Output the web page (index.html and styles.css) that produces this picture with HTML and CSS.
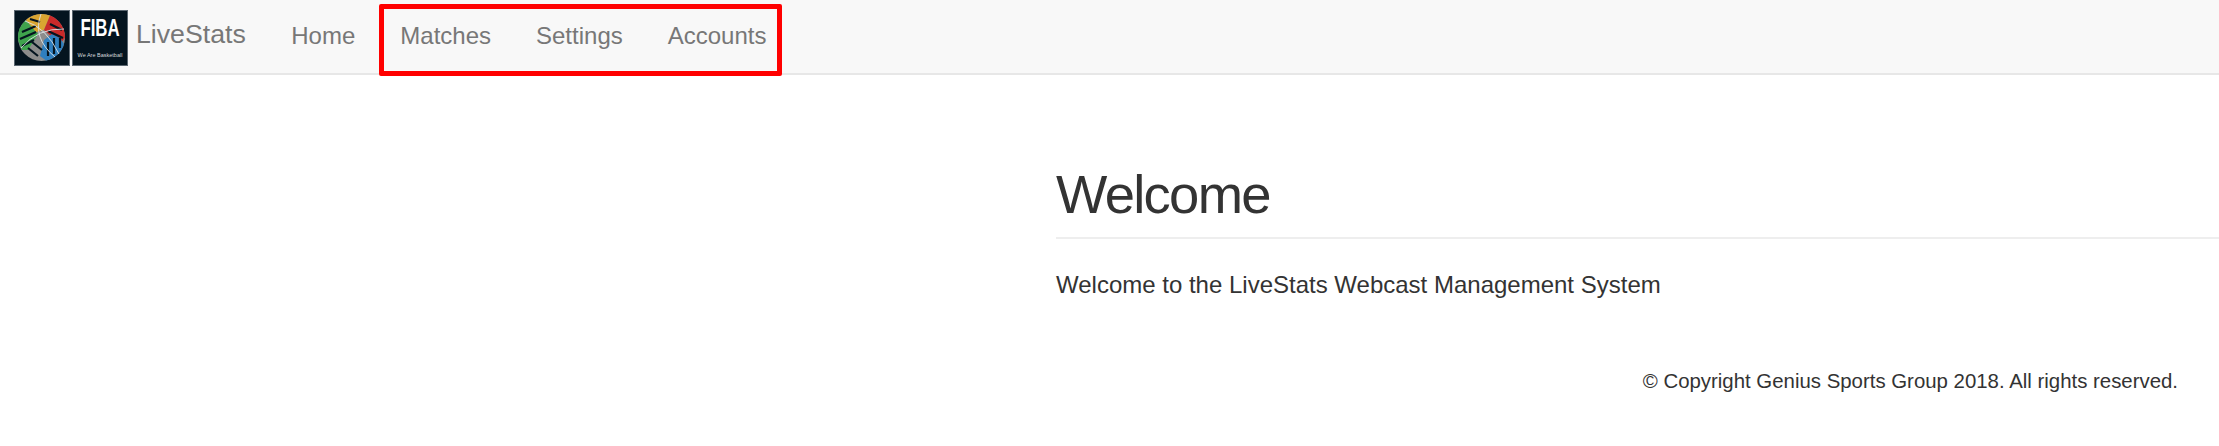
FILE: index.html
```html
<!DOCTYPE html>
<html lang="en">
<head>
    <meta charset="UTF-8">
    <title>LiveStats</title>
    <link rel="stylesheet" href="styles.css">
</head>
<body>
<nav class="navbar">
    <a href="#" class="brand">
        <svg class="logo" width="56" height="56" viewBox="0 0 56 56">
            <rect x="0.5" y="0.5" width="55" height="55" fill="#04141f" stroke="#5a6670"/>
            <!-- ball segments -->
            <circle cx="27.5" cy="27.5" r="23.5" fill="#8c8c8c"/>
            <path d="M4 30 A23.5 23.5 0 0 1 12 10 L24 24 L14 40 L8 40 Z" fill="#3fa34d"/>
            <path d="M12 10 A23.5 23.5 0 0 1 36 5.5 L30 20 L22 22 Z" fill="#d9a531"/>
            <path d="M36 5.5 A23.5 23.5 0 0 1 51 28 L46 34 L30 20 Z" fill="#c92a2a"/>
            <path d="M50 34 A23.5 23.5 0 0 1 32 50.5 L26 46 L30 30 L38 24 L46 28 Z" fill="#2f7fbf"/>
            <!-- dark stripes -->
            <path d="M8 22 L22 16 M6 29 L22 22 M8 36 L20 30 M16 9 L26 12 M36 14 L48 20 M34 21 L49 28 M34 32 L34 46 M40 28 L40 44 M46 28 L46 38 M14 38 L24 46 M18 32 L28 40" stroke="#04141f" stroke-width="2.2" fill="none"/>
            <!-- white seams -->
            <path d="M27 4 Q18 28 41 47 M11 11 Q32 17 45 44 M7 38 Q24 18 50 19" stroke="#dfe4e8" stroke-width="0.9" fill="none"/>
        </svg>
        <span class="logo logo-fiba">
            <span class="fiba-name">FIBA</span>
            <span class="fiba-tag">We Are Basketball</span>
        </span>
        <span class="brand-name">LiveStats</span>
    </a>
    <ul class="nav">
        <li><a href="#">Home</a></li>
        <li><a href="#">Matches</a></li>
        <li><a href="#">Settings</a></li>
        <li><a href="#">Accounts</a></li>
    </ul>
    <div class="highlight"></div>
</nav>
<main class="content">
    <div class="column">
        <h1 class="title">Welcome</h1>
        <p class="intro">Welcome to the LiveStats Webcast Management System</p>
    </div>
</main>
<footer class="footer">&copy; Copyright Genius Sports Group 2018. All rights reserved.</footer>
</body>
</html>
```

FILE: styles.css
```css
body {
    margin: 0;
    height: 446px;
    overflow: hidden;
    background: #fff;
    font-family: "Liberation Sans", Arial, sans-serif;
    color: #333;
}
a {
    text-decoration: none;
}
.navbar {
    position: relative;
    display: flex;
    height: 73px;
    background: #f8f8f8;
    border-bottom: 2px solid #e7e7e7;
}
.brand {
    display: flex;
    align-items: center;
    gap: 2px;
    padding: 3px 0 0 14px;
}
.logo {
    flex: none;
    box-sizing: border-box;
    width: 56px;
    height: 56px;
}
.logo-fiba {
    display: flex;
    flex-direction: column;
    align-items: center;
    background: #04141f;
    border: 1px solid #5a6670;
    color: #fff;
}
.fiba-name {
    margin-top: 5px;
    font-size: 24px;
    line-height: 24px;
    font-weight: bold;
    transform: scaleX(0.7);
}
.fiba-tag {
    margin-top: 11px;
    font-size: 5.5px;
    line-height: 8px;
    white-space: nowrap;
    color: #d5d9dc;
}
.brand-name {
    margin-left: 6px;
    margin-bottom: 7px;
    font-size: 26.7px;
    color: #777;
}
.nav {
    display: flex;
    list-style: none;
    margin: 0 0 0 23px;
    padding: 0;
}
.nav a {
    display: block;
    padding: 0 22.5px;
    line-height: 71px;
    font-size: 24px;
    color: #777;
}
.highlight {
    position: absolute;
    left: 379px;
    top: 4px;
    width: 403px;
    height: 72px;
    box-sizing: border-box;
    border: 5px solid #f00;
    border-radius: 2px;
}
.content {
    padding: 0 0 0 1056px;
}
.title {
    margin: 0;
    padding: 89px 0 12px;
    border-bottom: 2px solid #eee;
    font-size: 54.4px;
    line-height: 61px;
    font-weight: normal;
    letter-spacing: -1.7px;
}
.intro {
    margin: 0;
    padding-top: 30px;
    font-size: 24px;
    line-height: 32px;
}
.footer {
    padding: 66px 41px 0 0;
    text-align: right;
    font-size: 20.4px;
    line-height: 28px;
}
```
